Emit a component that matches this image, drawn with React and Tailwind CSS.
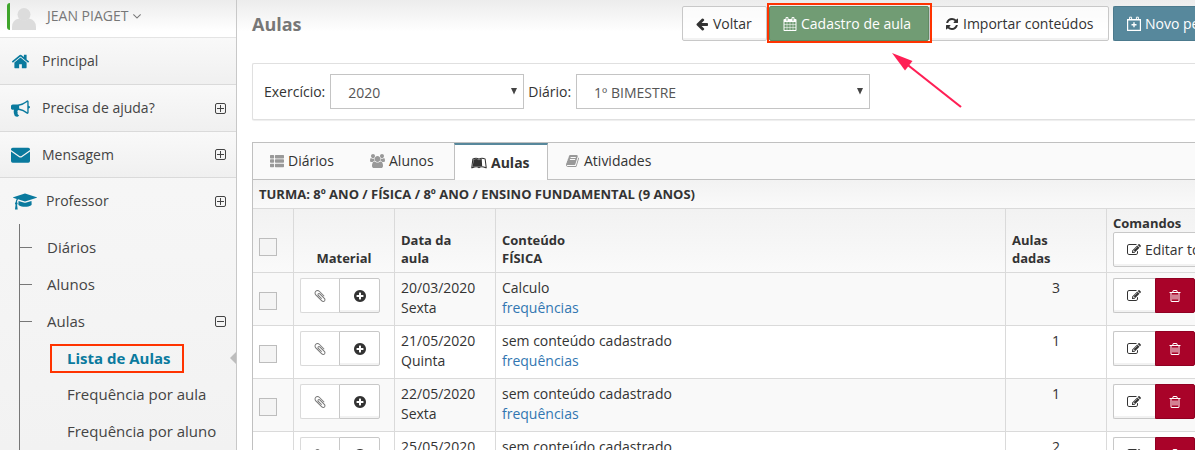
import { useState } from 'react'
import { FaLeanpub, FaThList } from 'react-icons/fa'

const ICONS = {
  home: 'M1472 992v480q0 26-19 45t-45 19h-384v-384h-256v384h-384q-26 0-45-19t-19-45v-480q0-1 .5-3t.5-3l575-474 575 474q1 2 1 6zm223-69l-62 74q-8 9-21 11h-3q-13 0-21-7l-692-577-692 577q-12 8-24 7-13-2-21-11l-62-74q-8-10-7-23.5t11-21.5l719-599q32-26 76-26t76 26l244 204v-195q0-14 9-23t23-9h192q14 0 23 9t9 23v408l219 182q10 8 11 21.5t-7 23.5z',
  bullhorn: 'M1664 640q53 0 90.5 37.5t37.5 90.5-37.5 90.5-90.5 37.5v384q0 52-38 90t-90 38q-417-347-812-380-58 19-91 66t-31 100.5 40 92.5q-20 33-23 65.5t6 58 33.5 55 48 50 61.5 50.5q-29 58-111.5 83t-168.5 11.5-132-55.5q-7-23-29.5-87.5t-32-94.5-23-89-15-101 3.5-98.5 22-110.5h-122q-66 0-113-47t-47-113v-192q0-66 47-113t113-47h480q435 0 896-384 52 0 90 38t38 90v384zm-128 604v-954q-394 302-768 343v270q377 42 768 341z',
  envelope: 'M0 420q0-164 160-164h1472q160 0 160 164v60l-800 560q-96 62-192 0L0 480zM0 620l740 520q156 100 312 0l740-520v880q0 164-160 164H160q-160 0-160-164z',
  cap: 'M1774 836l18 316q4 69-82 128t-235 93.5-323 34.5-323-34.5-235-93.5-82-128l18-316 574 181q22 7 48 7t48-7zm530-324q0 23-22 31l-1120 352q-4 1-10 1t-10-1l-652-206q-43 34-71 111.5t-34 178.5q63 36 63 109 0 69-58 107l58 433q2 14-8 25-9 11-24 11h-192q-15 0-24-11-10-11-8-25l58-433q-58-38-58-107 0-73 65-111 11-207 98-330l-333-104q-22-8-22-31t22-31l1120-352q4-1 10-1t10 1l1120 352q22 8 22 31z',
  angleDown: 'M1395 736q0 13-10 23l-466 466q-10 10-23 10t-23-10l-466-466q-10-10-10-23t10-23l50-50q10-10 23-10t23 10l393 393 393-393q10-10 23-10t23 10l50 50q10 10 10 23z',
  arrowLeft: 'M1664 896v128q0 53-32.5 90.5t-84.5 37.5h-704l293 294q38 36 38 90t-38 90l-75 76q-37 37-90 37-52 0-91-37l-651-652q-37-37-37-90 0-52 37-91l651-650q38-38 91-38 52 0 90 38l75 74q38 38 38 91t-38 91l-293 293h704q52 0 84.5 37.5t32.5 90.5z',
  calendar: 'M192 1664h288v-288h-288v288zm352 0h320v-288h-320v288zm-352-352h288v-320h-288v320zm352 0h320v-320h-320v320zm-352-384h288v-288h-288v288zm736 736h320v-288h-320v288zm-384-736h320v-288h-320v288zm768 736h288v-288h-288v288zm-384-352h320v-320h-320v320zm-352-864v-288q0-13-9.5-22.5t-22.5-9.5h-64q-13 0-22.5 9.5t-9.5 22.5v288q0 13 9.5 22.5t22.5 9.5h64q13 0 22.5-9.5t9.5-22.5zm736 864h288v-320h-288v320zm-384-384h320v-288h-320v288zm384 0h288v-288h-288v288zm32-480v-288q0-13-9.5-22.5t-22.5-9.5h-64q-13 0-22.5 9.5t-9.5 22.5v288q0 13 9.5 22.5t22.5 9.5h64q13 0 22.5-9.5t9.5-22.5zm384-64v1280q0 52-38 90t-90 38h-1408q-52 0-90-38t-38-90v-1280q0-52 38-90t90-38h128v-96q0-66 47-113t113-47h64q66 0 113 47t47 113v96h384v-96q0-66 47-113t113-47h64q66 0 113 47t47 113v96h128q52 0 90 38t38 90z',
  refresh: 'M1639 1056q0 5-1 7-64 268-268 434.5t-478 166.5q-146 0-282.5-55t-243.5-157l-129 129q-19 19-45 19t-45-19-19-45v-448q0-26 19-45t45-19h448q26 0 45 19t19 45-19 45l-137 137q71 66 161 102t187 36q134 0 250-65t186-179q11-17 53-117 8-23 30-23h192q13 0 22.5 9.5t9.5 22.5zm25-800v448q0 26-19 45t-45 19h-448q-26 0-45-19t-19-45 19-45l138-138q-148-137-349-137-134 0-250 65t-186 179q-11 17-53 117-8 23-30 23h-199q-13 0-22.5-9.5t-9.5-22.5v-7q65-268 270-434.5t480-166.5q146 0 284 55.5t245 156.5l130-129q19-19 45-19t45 19 19 45z',
  users: 'M529 896q-162 5-265 128h-134q-82 0-138-40.5t-56-118.5q0-353 124-353 6 0 43.5 21t97.5 42.5 119 21.5q67 0 133-23-5 37-5 66 0 139 81 256zm1071 637q0 120-73 189.5t-194 69.5h-874q-121 0-194-69.5t-73-189.5q0-53 3.5-103.5t14-109 26.5-108.5 43-97.5 62-81 85.5-53.5 111.5-20q10 0 43 21.5t73 48 107 48 135 21.5 135-21.5 107-48 73-48 43-21.5q61 0 111.5 20t85.5 53.5 62 81 43 97.5 26.5 108.5 14 109 3.5 103.5zm-1024-1277q0 106-75 181t-181 75-181-75-75-181 75-181 181-75 181 75 75 181zm704 384q0 159-112.5 271.5t-271.5 112.5-271.5-112.5-112.5-271.5 112.5-271.5 271.5-112.5 271.5 112.5 112.5 271.5zm576 225q0 78-56 118.5t-138 40.5h-134q-103-123-265-128 81-117 81-256 0-29-5-66 66 23 133 23 59 0 119-21.5t97.5-42.5 43.5-21q124 0 124 353zm-128-609q0 106-75 181t-181 75-181-75-75-181 75-181 181-75 181 75 75 181z',
  book: 'M1639 478q40 57 18 129l-275 906q-19 64-76.5 107.5t-122.5 43.5h-923q-77 0-148.5-53.5t-99.5-131.5q-24-67-2-127 0-4 3-27t4-37q1-8-3-21.5t-3-19.5q2-11 8-21t16.5-23.5 16.5-23.5q23-38 45-91.5t30-91.5q3-10 .5-30t-.5-28q3-11 17-28t17-23q21-36 42-92t25-90q1-9-2.5-32t.5-28q4-13 22-30.5t22-22.5q19-26 42.5-84.5t27.5-96.5q1-8-3-25.5t-2-26.5q2-8 9-18t18-23 17-21q8-12 16.5-30.5t15-35 16-36 19.5-32 26.5-23.5 36-11.5 47.5 5.5l-1 3q38-9 51-9h761q74 0 114 56t18 130l-274 906q-36 119-71.5 153.5t-128.5 34.5h-869q-27 0-38 15-11 16-1 43 24 70 144 70h923q29 0 56-15.5t35-41.5l300-987q7-22 5-57 38 15 59 43zm-1064 2q-4 13 2 22.5t20 9.5h608q13 0 25.5-9.5t16.5-22.5l21-64q4-13-2-22.5t-20-9.5h-608q-13 0-25.5 9.5t-16.5 22.5zm-83 256q-4 13 2 22.5t20 9.5h608q13 0 25.5-9.5t16.5-22.5l21-64q4-13-2-22.5t-20-9.5h-608q-13 0-25.5 9.5t-16.5 22.5z',
  paperclip: 'M1596 1385q0 117-79 196t-196 79q-135 0-235-100l-777-776q-113-115-113-271 0-159 110-270t269-111q158 0 273 113l605 606q10 10 10 22 0 16-30.5 46.5t-46.5 30.5q-13 0-23-10l-606-607q-79-77-181-77-106 0-179 75t-73 181q0 105 76 181l776 777q63 63 145 63 64 0 106-42t42-106q0-82-63-145l-581-581q-26-24-60-24-29 0-48 19t-19 48q0 32 25 59l410 410q10 10 10 22 0 16-31 47t-47 31q-12 0-22-10l-410-410q-63-61-63-149 0-82 57-139t139-57q88 0 149 63l581 581q100 98 100 235z',
  plusCircle: 'M1344 960v-128q0-26-19-45t-45-19h-256v-256q0-26-19-45t-45-19h-128q-26 0-45 19t-19 45v256h-256q-26 0-45 19t-19 45v128q0 26 19 45t45 19h256v256q0 26 19 45t45 19h128q26 0 45-19t19-45v-256h256q26 0 45-19t19-45zm320-64q0 209-103 385.5t-279.5 279.5-385.5 103-385.5-103-279.5-279.5-103-385.5 103-385.5 279.5-279.5 385.5-103 385.5 103 279.5 279.5 103 385.5z',
  edit: 'M888 1184l116-116-152-152-116 116v56h96v96h56zm440-720q-16-16-33 1l-350 350q-17 17-1 33t33-1l350-350q17-17 1-33zm80 594v190q0 119-84.5 203.5t-203.5 84.5h-832q-119 0-203.5-84.5t-84.5-203.5v-832q0-119 84.5-203.5t203.5-84.5h832q63 0 117 25 15 7 18 23 3 17-9 29l-49 49q-14 14-32 8-23-6-45-6h-832q-66 0-113 47t-47 113v832q0 66 47 113t113 47h832q66 0 113-47t47-113v-126q0-13 9-22l64-64q15-15 35-7t20 29zm-96-738l288 288-672 672h-288v-288zm444 132l-92 92-288-288 92-92q28-28 68-28t68 28l152 152q28 28 28 68t-28 68z',
  trash: 'M704 736v576q0 14-9 23t-23 9h-64q-14 0-23-9t-9-23v-576q0-14 9-23t23-9h64q14 0 23 9t9 23zm256 0v576q0 14-9 23t-23 9h-64q-14 0-23-9t-9-23v-576q0-14 9-23t23-9h64q14 0 23 9t9 23zm256 0v576q0 14-9 23t-23 9h-64q-14 0-23-9t-9-23v-576q0-14 9-23t23-9h64q14 0 23 9t9 23zm128 724v-948h-896v948q0 22 7 40.5t14.5 27 10.5 8.5h832q3 0 10.5-8.5t14.5-27 7-40.5zm-672-1076h448l-48-117q-7-9-17-11h-317q-10 2-17 11zm928 32v64q0 14-9 23t-23 9h-96v948q0 83-47 143.5t-113 60.5h-832q-66 0-113-58.5t-47-141.5v-952h-96q-14 0-23-9t-9-23v-64q0-14 9-23t23-9h309l70-167q15-37 54-63t79-26h320q40 0 79 26t54 63l70 167h309q14 0 23 9t9 23z',
}

const AULAS = [
  { data: '20/03/2020', dia: 'Sexta', conteudo: 'Calculo', dadas: 3 },
  { data: '21/05/2020', dia: 'Quinta', conteudo: 'sem conteúdo cadastrado', dadas: 1 },
  { data: '22/05/2020', dia: 'Sexta', conteudo: 'sem conteúdo cadastrado', dadas: 1 },
  { data: '25/05/2020', dia: 'Segunda', conteudo: 'sem conteúdo cadastrado', dadas: 2 },
]

const MENU = [
  { label: 'Principal', icon: 'home' },
  { label: 'Precisa de ajuda?', icon: 'bullhorn', expandable: true },
  { label: 'Mensagem', icon: 'envelope', expandable: true },
]

const BTN = 'inline-flex h-[35px] shrink-0 items-center whitespace-nowrap border text-sm'
const BTN_DEFAULT = 'border-[#c8c8c8] bg-white/70 shadow-[inset_0_-2px_0_rgba(0,0,0,0.05)]'
const CHECKBOX = 'block size-[18px] appearance-none border border-[#bdbdbd] bg-[#f4f4f4] checked:bg-[#57889c]'

function Icon({ name, viewBox = '0 0 1792 1792', className }) {
  return (
    <svg viewBox={viewBox} fill="currentColor" aria-hidden="true" className={`shrink-0 ${className}`}>
      <path d={ICONS[name]} />
    </svg>
  )
}

function Toggle({ open }) {
  return (
    <svg viewBox="0 0 11 11" fill="none" stroke="#444" aria-hidden="true" className="ml-auto mr-2.5 size-[11px] shrink-0">
      <rect x="0.5" y="0.5" width="10" height="10" rx="1.5" />
      <path d={open ? 'M2 5.5h7' : 'M2 5.5h7M5.5 2v7'} />
    </svg>
  )
}

function CalendarPlus() {
  return (
    <svg viewBox="0 0 14 15" fill="none" stroke="currentColor" aria-hidden="true" className="h-[15px] w-3.5 shrink-0">
      <path d="M.6 3.5h12.8v10.8H.6z" strokeWidth="1.2" />
      <path d="M.5 3.8h13" strokeWidth="1.6" />
      <path d="M2.6 3.6V1.2h2v2.4M9.4 3.6V1.2h2v2.4" />
      <path d="M7 6.3v5M4.5 8.8h5" strokeWidth="1.4" />
    </svg>
  )
}

function Sidebar() {
  return (
    <aside className="flex w-[237px] shrink-0 flex-col border-r border-[#c8c8c8] bg-gradient-to-b from-[#f9f9f9] to-[#f2f2f2] text-[#444]">
      <div className="flex h-[38px] shrink-0 items-start border-b border-[#e4e4e4] bg-gradient-to-b from-[#ececec] to-white to-85% pl-[7px] pt-[3px]">
        <span className="h-[27px] w-[3px] rounded-l-sm bg-[#3fa52b]" />
        <svg viewBox="0 0 26 27" fill="#dcdcdc" aria-hidden="true" className="ml-px h-[27px] w-[26px]">
          <path d="M1 27v-3q0-7 7-8.500 5 4 10 0 7 1.500 7 8.500v3z" />
          <circle cx="13" cy="11.500" r="6.500" />
        </svg>
        <button type="button" className="ml-2.5 flex h-[26px] items-center text-sm text-[#777]">
          JEAN PIAGET
          <Icon name="angleDown" className="ml-0.5 size-3.5" />
        </button>
      </div>

      <nav className="shrink-0">
        <ul>
          {MENU.map((item) => (
            <li key={item.label} className="h-[47px] border-b border-[#dadada] bg-gradient-to-b from-[#f9f9f9] to-[#f0f0f0] last:h-[46px]">
              <a href="#" className="flex h-full items-center pl-[11px] text-sm">
                <Icon name={item.icon} className="size-[19px] text-[#0a7a9e]" />
                <span className="ml-3">{item.label}</span>
                {item.expandable && <Toggle />}
              </a>
            </li>
          ))}
        </ul>
        <a href="#" className="flex h-[46px] items-center pl-[13px] text-sm">
          <Icon name="cap" viewBox="0 0 2304 1792" className="h-[19px] w-6 text-[#0a7a9e]" />
          <span className="ml-[9px]">Professor</span>
          <Toggle />
        </a>
        <ul className="ml-[19px] border-l border-[#777] pb-10 pt-[5px] text-[15px]">
          {['Diários', 'Alunos', 'Aulas'].map((label) => (
            <li key={label} className="flex h-[37px] items-center">
              <span className="h-px w-3 bg-[#777]" />
              <a href="#" className="ml-[15px]">{label}</a>
              {label === 'Aulas' && <Toggle open />}
            </li>
          ))}
          <li className="flex h-9 items-center pl-[30px]">
            <a href="#" className="flex h-[29px] w-[134px] items-center border-2 border-[#ff3300] pl-[15px] font-bold text-[#0a7a9e]">
              Lista de Aulas
            </a>
            <svg viewBox="0 0 6 12" fill="#bdbdbd" aria-hidden="true" className="ml-auto h-3 w-1.5">
              <path d="M6 0v12L0 6z" />
            </svg>
          </li>
          {['Frequência por aula', 'Frequência por aluno'].map((label) => (
            <li key={label} className="flex h-[37px] items-center pl-[47px]">
              <a href="#">{label}</a>
            </li>
          ))}
        </ul>
      </nav>
    </aside>
  )
}

function Toolbar() {
  return (
    <header className="flex items-start pt-1.5">
      <h1 className="mt-1.5 text-lg font-bold leading-6 text-[#777]">Aulas</h1>
      <div className="relative ml-auto flex">
        <button type="button" className={`${BTN} ${BTN_DEFAULT} w-[85px] gap-1 rounded-[2px] pl-3`}>
          <Icon name="arrowLeft" className="size-3.5" />
          Voltar
        </button>
        <div className="relative ml-0.5 flex">
          <button type="button" className={`${BTN} w-[160px] gap-1 rounded-[2px] border-[#5f8a63] bg-[#719c74] pl-[13px] text-white`}>
            <Icon name="calendar" className="size-3.5" />
            Cadastro de aula
          </button>
          <span className="pointer-events-none absolute -bottom-0.5 -left-0.5 -right-[3px] -top-[3px] border-2 border-[#ff3300]" />
        </div>
        <button type="button" className={`${BTN} ${BTN_DEFAULT} w-[180px] gap-1 rounded-[2px] pl-[15px]`}>
          <Icon name="refresh" className="size-3.5" />
          Importar conteúdos
        </button>
        <button type="button" className={`${BTN} ml-1 w-[82px] gap-1 overflow-hidden rounded-l-[2px] border-r-0 border-[#4c7a8d] bg-[#57889c] pl-[13px] text-white`}>
          <CalendarPlus />
          Novo período
        </button>
        <svg viewBox="0 0 72 58" aria-hidden="true" className="pointer-events-none absolute left-[210px] top-[46px] h-[58px] w-[72px]">
          <path d="M12 10l57 45" stroke="#ff1f55" strokeWidth="2.200" />
          <path d="M0 1l20.500 8-7.500 9.500z" fill="#ff1f55" />
        </svg>
      </div>
    </header>
  )
}

function Select({ id, label, value, className }) {
  return (
    <>
      <label htmlFor={id} className="mr-[5px] text-sm">{label}</label>
      <div className={`relative mr-1 ${className}`}>
        <select id={id} defaultValue={value} className="h-[35px] w-full appearance-none border border-[#c4c4c4] bg-white pl-[17px] pt-0.5 text-sm text-[#555]">
          <option>{value}</option>
        </select>
        <svg viewBox="0 0 6 7" fill="#444" aria-hidden="true" className="pointer-events-none absolute right-[7px] top-3.5 h-[7px] w-1.5">
          <path d="M0 0h6L3 6.500z" />
        </svg>
      </div>
    </>
  )
}

function Tabs() {
  const tab = 'flex h-full items-center gap-1 text-sm'
  return (
    <div role="tablist" className="flex h-[38px] border-y border-[#c0c0c0] bg-[#fafafa]">
      <button type="button" role="tab" className={`${tab} w-[101px] pl-[17px]`}>
        <FaThList className="size-3.5 text-[#999]" />
        Diários
      </button>
      <button type="button" role="tab" className={`${tab} w-[100px] pl-4`}>
        <Icon name="users" viewBox="-64 0 1920 1792" className="h-3.5 w-[15px] text-[#999]" />
        Alunos
      </button>
      <button type="button" role="tab" aria-selected="true" className="-mb-px flex w-[94px] items-center gap-1 border-x border-t-2 border-x-[#c0c0c0] border-t-[#57889c] bg-white pl-4 text-sm font-bold">
        <FaLeanpub className="size-4" />
        Aulas
      </button>
      <button type="button" role="tab" className={`${tab} pl-[18px]`}>
        <Icon name="book" className="size-3.5 text-[#999]" />
        Atividades
      </button>
    </div>
  )
}

export default function App() {
  const [selected, setSelected] = useState([])
  const allSelected = selected.length === AULAS.length
  const th = 'border-b border-r border-[#dadada] align-bottom px-1.5 pb-[5px] text-left'
  const td = 'border-b border-r border-[#dadada] align-top px-1.5 pt-[5px]'

  function toggle(data) {
    setSelected(selected.includes(data) ? selected.filter((d) => d !== data) : [...selected, data])
  }

  return (
    <div className="flex h-screen overflow-hidden bg-white font-['Open_Sans',sans-serif] text-[#333]">
      <Sidebar />
      <main className="min-w-0 flex-1 overflow-hidden bg-[linear-gradient(#ececec,#fff_32px)] pl-[15px]">
        <Toolbar />

        <form className="mt-[22px] flex h-[57px] items-center rounded-l-[2px] border border-r-0 border-[#e0e0e0] bg-white pl-[11px] shadow-[0_1px_1px_#eee]">
          <Select id="exercicio" label="Exercício:" value="2020" className="w-[194px]" />
          <Select id="diario" label="Diário:" value="1º BIMESTRE" className="w-[294px]" />
        </form>

        <section className="mt-[22px] border-l border-[#c0c0c0]">
          <Tabs />
          <table className="w-full table-fixed border-separate border-spacing-0 text-sm">
            <colgroup>
              <col className="w-[41px]" />
              <col className="w-[101px]" />
              <col className="w-[101px]" />
              <col />
              <col className="w-[101px]" />
              <col className="w-[88px]" />
            </colgroup>
            <thead className="text-[13px] leading-[18px]">
              <tr className="h-[29px] bg-gradient-to-b from-[#f2f2f2] to-[#fafafa]">
                <th colSpan={6} className="border-b border-[#dadada] px-1.5 text-left">
                  TURMA: 8º ANO / FÍSICA / 8º ANO / ENSINO FUNDAMENTAL (9 ANOS)
                </th>
              </tr>
              <tr className="h-16 bg-gradient-to-b from-[#f2f2f2] to-[#fafafa]">
                <th className={th}>
                  <input
                    type="checkbox"
                    aria-label="Selecionar todas"
                    checked={allSelected}
                    onChange={() => setSelected(allSelected ? [] : AULAS.map((a) => a.data))}
                    className={`${CHECKBOX} mb-[11px]`}
                  />
                </th>
                <th className="border-b border-r border-[#dadada] pb-[5px] text-center align-bottom">Material</th>
                <th className={th}>Data da<br />aula</th>
                <th className={th}>Conteúdo<br />FÍSICA</th>
                <th className={th}>Aulas<br />dadas</th>
                <th className="overflow-hidden border-b border-[#dadada] pb-[5px] pl-1.5 text-left align-bottom">
                  Comandos
                  <button type="button" className={`${BTN} w-[100px] gap-1 rounded-l-[2px] border-[#c8c8c8] bg-white pl-[13px] font-normal shadow-[inset_0_-2px_0_rgba(0,0,0,0.05)]`}>
                    <Icon name="edit" className="size-3.5" />
                    Editar todos
                  </button>
                </th>
              </tr>
            </thead>
            <tbody className="leading-5">
              {AULAS.map((aula) => (
                <tr key={aula.data} className="h-[53px] odd:bg-[#f9f9f9]">
                  <td className={td}>
                    <input
                      type="checkbox"
                      aria-label={`Selecionar ${aula.data}`}
                      checked={selected.includes(aula.data)}
                      onChange={() => toggle(aula.data)}
                      className={`${CHECKBOX} mt-3.5`}
                    />
                  </td>
                  <td className={td}>
                    <div className="flex">
                      <button type="button" aria-label="Anexos" className={`${BTN} w-[39px] justify-center rounded-l-[2px] border-r-0 border-[#dadada] bg-white text-[#777]`}>
                        <Icon name="paperclip" className="size-3.5" />
                      </button>
                      <button type="button" aria-label="Adicionar material" className={`${BTN} w-[41px] justify-center rounded-r-[2px] border-[#c8c8c8] bg-white shadow-[inset_0_-2px_0_rgba(0,0,0,0.05)]`}>
                        <Icon name="plusCircle" className="size-3.5" />
                      </button>
                    </div>
                  </td>
                  <td className={td}>{aula.data}<br />{aula.dia}</td>
                  <td className={td}>
                    {aula.conteudo}<br />
                    <a href="#" className="text-[#3276b1]">frequências</a>
                  </td>
                  <td className={`${td} text-center`}>{aula.dadas}</td>
                  <td className="border-b border-[#dadada] pl-1.5 pt-[5px] align-top">
                    <div className="flex">
                      <button type="button" aria-label="Editar" className={`${BTN} w-[42px] justify-center rounded-l-[2px] border-r-0 border-[#c8c8c8] bg-white shadow-[inset_0_-2px_0_rgba(0,0,0,0.05)]`}>
                        <Icon name="edit" className="size-3.5" />
                      </button>
                      <button type="button" aria-label="Excluir" className={`${BTN} w-10 justify-center rounded-r-[2px] border-[#900022] bg-[#a90329] text-white`}>
                        <Icon name="trash" className="size-3.5" />
                      </button>
                    </div>
                  </td>
                </tr>
              ))}
            </tbody>
          </table>
        </section>
      </main>
    </div>
  )
}
